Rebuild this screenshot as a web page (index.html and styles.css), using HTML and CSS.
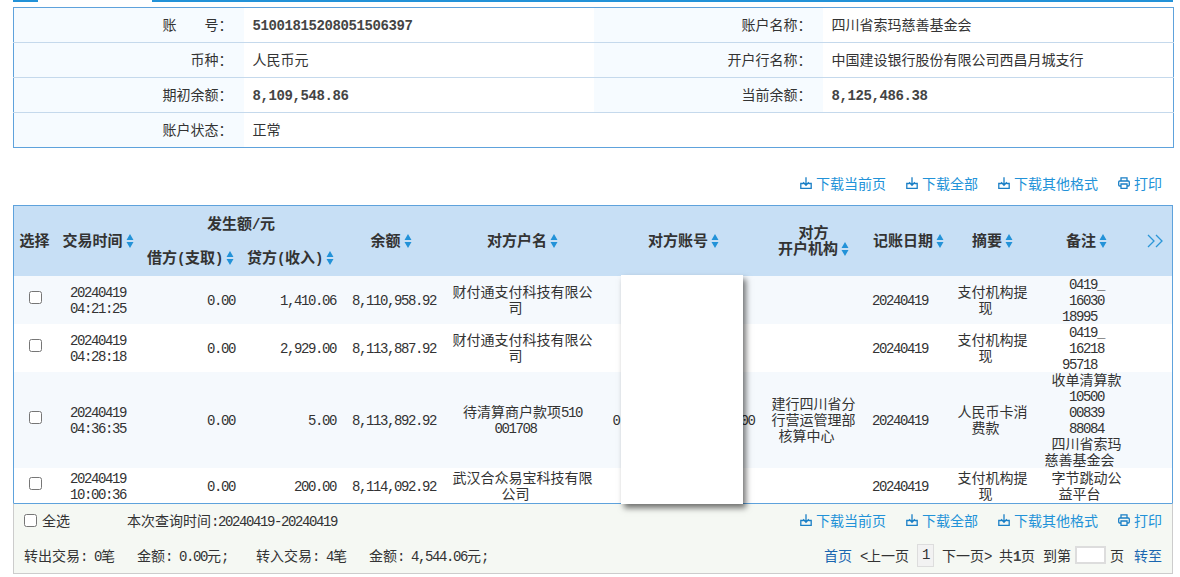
FILE: index.html
```html
<!DOCTYPE html>
<html lang="zh-CN">
<head>
<meta charset="utf-8">
<title>账户明细</title>
<link rel="stylesheet" href="styles.css">
</head>
<body>
<svg class="defs" width="0" height="0" aria-hidden="true">
  <symbol id="sort" viewBox="0 0 8 16"><path d="M4 1 7.500 7H.5ZM4 15 .5 9H7.500Z"/></symbol>
  <symbol id="dl" viewBox="0 0 12 12"><path d="M3.500 6.500H.8V11.300H11.200V6.500H8.500M6 .3V8.300M3.200 5.300 6 8.300 8.800 5.300" fill="none" stroke="currentColor" stroke-width="1.3"/></symbol>
  <symbol id="pr" viewBox="0 0 12 12"><path d="M3 9H1.700Q.7 9 .7 8V5Q.7 4 1.700 4H10.300Q11.300 4 11.300 5V8Q11.300 9 10.300 9H9M3 4V.8H9V4M3 7H9V11.300H3Z" fill="none" stroke="currentColor" stroke-width="1.3"/></symbol>
</svg>
<main class="page">
  <div class="tabline"><span class="tab-a"></span><span class="tab-gap"></span><span class="tab-b"></span></div>
  <table class="info">
    <colgroup><col class="i1"><col class="i2"><col class="i3"><col class="i4"></colgroup>
    <tr><th>账<span class="wide"></span>号：</th><td><span class="nb">51001815208051506397</span></td><th>账户名称：</th><td>四川省索玛慈善基金会</td></tr>
    <tr><th>币种：</th><td>人民币元</td><th>开户行名称：</th><td>中国建设银行股份有限公司西昌月城支行</td></tr>
    <tr><th>期初余额：</th><td><span class="nb">8,109,548.86</span></td><th>当前余额：</th><td><span class="nb">8,125,486.38</span></td></tr>
    <tr><th>账户状态：</th><td>正常</td><td class="blank"></td><td class="blank"></td></tr>
  </table>
  <div class="tools">
    <a class="tool"><svg class="ico"><use href="#dl"/></svg>下载当前页</a>
    <a class="tool"><svg class="ico"><use href="#dl"/></svg>下载全部</a>
    <a class="tool"><svg class="ico"><use href="#dl"/></svg>下载其他格式</a>
    <a class="tool"><svg class="ico"><use href="#pr"/></svg>打印</a>
  </div>
  <div class="gridbox">
    <div class="clip">
      <table class="grid">
        <colgroup><col class="c1"><col class="c2"><col class="c3"><col class="c4"><col class="c5"><col class="c6"><col class="c7"><col class="c8"><col class="c9"><col class="c10"><col class="c11"><col class="c12"></colgroup>
        <thead>
          <tr>
            <th rowspan="2">选择</th>
            <th rowspan="2">交易时间<svg class="sort"><use href="#sort"/></svg></th>
            <th colspan="2">发生额<span class="p">/</span>元</th>
            <th rowspan="2">余额<svg class="sort"><use href="#sort"/></svg></th>
            <th rowspan="2">对方户名<svg class="sort"><use href="#sort"/></svg></th>
            <th rowspan="2">对方账号<svg class="sort"><use href="#sort"/></svg></th>
            <th rowspan="2">对方<br>开户机构<svg class="sort"><use href="#sort"/></svg></th>
            <th rowspan="2" class="date-h">记账日期<svg class="sort"><use href="#sort"/></svg></th>
            <th rowspan="2">摘要<svg class="sort"><use href="#sort"/></svg></th>
            <th rowspan="2">备注<svg class="sort"><use href="#sort"/></svg></th>
            <th rowspan="2" class="more"><svg class="chev" viewBox="0 0 16 14"><path d="M1 1 7 7 1 13M9 1 15 7 9 13"/></svg></th>
          </tr>
          <tr>
            <th>借方<span class="p">(</span>支取<span class="p">)</span><svg class="sort"><use href="#sort"/></svg></th>
            <th>贷方<span class="p">(</span>收入<span class="p">)</span><svg class="sort"><use href="#sort"/></svg></th>
          </tr>
        </thead>
        <tbody>
          <tr class="r1 alt">
            <td><input class="chk" type="checkbox"></td>
            <td><span class="n">20240419<br>04:21:25</span></td>
            <td class="amt"><span class="n">0.00</span></td><td class="amt"><span class="n">1,410.06</span></td><td class="amt"><span class="n">8,110,958.92</span></td>
            <td>财付通支付科技有限公<br><span class="tail">司</span></td><td></td><td></td>
            <td><span class="n">20240419</span></td>
            <td>支付机构提<br><span class="tail">现</span></td>
            <td><span class="n">0419_<br>16030<br><span class="tail">18995</span></span></td><td></td>
          </tr>
          <tr class="r1">
            <td><input class="chk" type="checkbox"></td>
            <td><span class="n">20240419<br>04:28:18</span></td>
            <td class="amt"><span class="n">0.00</span></td><td class="amt"><span class="n">2,929.00</span></td><td class="amt"><span class="n">8,113,887.92</span></td>
            <td>财付通支付科技有限公<br><span class="tail">司</span></td><td></td><td></td>
            <td><span class="n">20240419</span></td>
            <td>支付机构提<br><span class="tail">现</span></td>
            <td><span class="n">0419_<br>16218<br><span class="tail">95718</span></span></td><td></td>
          </tr>
          <tr class="r3 alt">
            <td><input class="chk" type="checkbox"></td>
            <td><span class="n">20240419<br>04:36:35</span></td>
            <td class="amt"><span class="n">0.00</span></td><td class="amt"><span class="n">5.00</span></td><td class="amt"><span class="n">8,113,892.92</span></td>
            <td>待清算商户款项<span class="n">510</span><br><span class="tail"><span class="n">001708</span></span></td>
            <td><span class="n">0</span><span class="acct"></span><span class="n">00</span></td>
            <td>建行四川省分<br>行营运管理部<br><span class="tail">核算中心</span></td>
            <td><span class="n">20240419</span></td>
            <td>人民币卡消<br><span class="tail">费款</span></td>
            <td>收单清算款<br><span class="n">10500<br>00839<br>88084</span><br>四川省索玛<br><span class="tail">慈善基金会</span></td><td></td>
          </tr>
          <tr class="r4">
            <td><input class="chk" type="checkbox"></td>
            <td><span class="n">20240419<br>10:00:36</span></td>
            <td class="amt"><span class="n">0.00</span></td><td class="amt"><span class="n">200.00</span></td><td class="amt"><span class="n">8,114,092.92</span></td>
            <td>武汉合众易宝科技有限<br><span class="tail">公司</span></td><td></td><td></td>
            <td><span class="n">20240419</span></td>
            <td>支付机构提<br><span class="tail">现</span></td>
            <td>字节跳动公<br><span class="tail">益平台</span></td><td></td>
          </tr>
        </tbody>
      </table>
    </div>
    <div class="mask"></div>
  </div>
  <div class="foot">
    <div class="frow">
      <label class="all"><input class="chk-all" type="checkbox">全选</label>
      <span class="query">本次查询时间<span class="n">:20240419-20240419</span></span>
      <div class="tools-in">
        <a class="tool"><svg class="ico"><use href="#dl"/></svg>下载当前页</a>
        <a class="tool"><svg class="ico"><use href="#dl"/></svg>下载全部</a>
        <a class="tool"><svg class="ico"><use href="#dl"/></svg>下载其他格式</a>
        <a class="tool"><svg class="ico"><use href="#pr"/></svg>打印</a>
      </div>
    </div>
    <div class="frow">
      <span class="stat s1">转出交易<span class="n">: 0</span>笔</span>
      <span class="stat s2">金额<span class="n">: 0.00</span>元<span class="n">;</span></span>
      <span class="stat s3">转入交易<span class="n">: 4</span>笔</span>
      <span class="stat">金额<span class="n">: 4,544.06</span>元<span class="n">;</span></span>
      <div class="pager">
        <a class="plink">首页</a>
        <span><span class="n">&lt;</span>上一页</span>
        <span class="pnum"><span class="n">1</span></span>
        <span>下一页<span class="n">&gt;</span></span>
        <span>共<span class="nb">1</span>页</span>
        <span class="to">到第<span class="pinput"></span>页</span>
        <a class="plink go">转至</a>
      </div>
    </div>
  </div>
</main>
</body>
</html>
```
FILE: styles.css
```css
* { box-sizing: border-box; }
html, body { margin: 0; padding: 0; }
body {
  font-family: "Noto Sans CJK SC", "Liberation Serif", sans-serif;
  font-size: 14px;
  line-height: 16px;
  color: #333;
  background: #fff;
}
.defs { position: absolute; }
.page { margin-left: 13px; width: 1160px; }

.n, .nb, .p {
  font-family: "Liberation Mono", "Noto Sans CJK SC", monospace;
  font-size: 14px;
  line-height: 12px;
}
.n { letter-spacing: -1.4px; }
.nb { font-weight: 700; letter-spacing: -0.4px; color: #444; }
.p { font-weight: 700; letter-spacing: -0.4px; }

.tabline { display: flex; height: 2px; margin-bottom: 5px; }
.tab-a { width: 25px; background: #2292d8; }
.tab-gap { width: 114px; }
.tab-b { flex: 1; background: #2292d8; }

.info {
  width: 1160px;
  table-layout: fixed;
  border-collapse: collapse;
  border: 1px solid #5ea2dc;
}
.info tr { height: 35px; }
.info tr + tr th, .info tr + tr td { border-top: 1px solid #c5d9ec; }
.i1 { width: 230px; } .i2 { width: 350px; } .i3 { width: 229px; } .i4 { width: 351px; }
.info th {
  background: #f6fbff;
  font-weight: 400;
  text-align: right;
  padding: 0 11px 2px 0;
}
.info td { padding: 0 0 2px 9px; }
.info td.blank { padding: 0; }
.wide { display: inline-block; width: 28px; }

.tools {
  display: flex;
  justify-content: flex-end;
  gap: 20px;
  height: 57px;
  padding: 25px 11px 0 0;
}
.tools-in { display: flex; gap: 20px; margin-left: auto; padding-right: 10px; }
.tool { display: flex; align-items: center; height: 20px; color: #2292d8; white-space: nowrap; }
.ico { width: 12px; height: 12px; margin-right: 4px; color: #1a7fc6; }

.gridbox { position: relative; }
.clip {
  height: 298px;
  overflow: hidden;
  border: 1px solid #5ea2dc;
  border-bottom: 0;
}
.grid {
  width: 1158px;
  table-layout: fixed;
  border-collapse: collapse;
  text-align: center;
}
.c1 { width: 41px; } .c2 { width: 86px; } .c3 { width: 99px; } .c4 { width: 101px; }
.c5 { width: 100px; } .c6 { width: 163px; } .c7 { width: 159px; } .c8 { width: 101px; }
.c9 { width: 72px; } .c10 { width: 113px; } .c11 { width: 75px; } .c12 { width: 48px; }
.grid thead tr { height: 35px; }
.grid th { background: #c7dff5; font-size: 15px; font-weight: 700; padding: 0 0 2px; white-space: nowrap; }
.grid th.date-h { padding-left: 9px; }
.grid td { padding: 0; white-space: nowrap; vertical-align: middle; }
.grid td::before { content: ""; display: block; margin-top: -1px; }
.grid td::after { content: ""; display: block; height: 1px; }
.grid .alt td { background: #f5f9fd; }
.r1 { height: 48px; }
.r3 { height: 96px; }
.r4 { height: 35px; }
.grid td.amt { text-align: right; padding-right: 5px; }
.tail { margin: 0 7px 0 -7px; }
.acct { display: inline-block; width: 121px; }
.sort { width: 8px; height: 16px; margin-left: 3px; vertical-align: -3px; fill: #2292d8; }
.grid th.more { text-align: right; padding-right: 9px; }
.chev { width: 16px; height: 14px; vertical-align: -2px; fill: none; stroke: #2a96d8; stroke-width: 1.3; }
.chk { display: block; width: 13px; height: 13px; margin: -4px 0 0 15px; }

.mask {
  position: absolute;
  left: 608px;
  top: 70px;
  width: 122px;
  height: 229px;
  background: #fff;
  box-shadow: 3px 4px 6px rgba(0, 0, 0, 0.55);
}

.foot {
  height: 71px;
  background: #f5f8f3;
  border: 1px solid #ccc;
  border-top: 1px solid #5ea2dc;
  padding-left: 10px;
}
.frow { display: flex; align-items: center; height: 35px; padding-bottom: 3px; }
.all { display: flex; align-items: center; width: 103px; }
.chk-all { width: 13px; height: 13px; margin: 0 5px 0 0; }
.stat { white-space: nowrap; }
.s1 { width: 113px; }
.s2 { width: 119px; }
.s3 { width: 113px; }
.pager { display: flex; align-items: center; gap: 8px; margin-left: auto; padding-right: 10px; }
.plink { color: #1a66b0; }
.go { margin-left: 2px; }
.pnum {
  display: flex;
  align-items: center;
  justify-content: center;
  width: 17px;
  height: 23px;
  background: #f2f2f2;
  border: 1px solid #ddd;
}
.to { display: flex; align-items: center; }
.pinput {
  width: 31px;
  height: 18px;
  margin: 0 4px;
  background: #fff;
  border: 2px solid #ddd;
}
```
